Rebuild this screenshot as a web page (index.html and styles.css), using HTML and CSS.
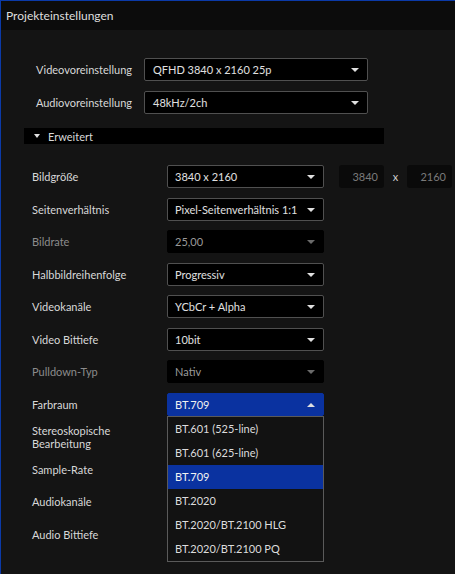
FILE: index.html
```html
<!DOCTYPE html>
<html lang="de">
<head>
<meta charset="utf-8">
<link rel="stylesheet" href="styles.css">
</head>
<body>
<div class="window">
  <div class="titlebar">Projekteinstellungen</div>
  <div class="content">
    <div class="presets">
      <div class="plabel">Videovoreinstellung</div>
      <div class="select wide"><span>QFHD 3840 x 2160 25p</span><i class="arrow"></i></div>
      <div class="plabel">Audiovoreinstellung</div>
      <div class="select wide"><span>48kHz/2ch</span><i class="arrow"></i></div>
    </div>
    <div class="section"><i class="arrow small"></i><span>Erweitert</span></div>
    <div class="rows">
      <div class="row">
        <div class="label">Bildgröße</div>
        <div class="select"><span>3840 x 2160</span><i class="arrow"></i></div>
        <div class="num">3840</div><div class="times">x</div><div class="num">2160</div>
      </div>
      <div class="row">
        <div class="label">Seitenverhältnis</div>
        <div class="select"><span>Pixel-Seitenverhältnis 1:1</span><i class="arrow"></i></div>
      </div>
      <div class="row">
        <div class="label disabled">Bildrate</div>
        <div class="select off"><span>25,00</span><i class="arrow"></i></div>
      </div>
      <div class="row">
        <div class="label">Halbbildreihenfolge</div>
        <div class="select"><span>Progressiv</span><i class="arrow"></i></div>
      </div>
      <div class="row">
        <div class="label">Videokanäle</div>
        <div class="select"><span>YCbCr + Alpha</span><i class="arrow"></i></div>
      </div>
      <div class="row">
        <div class="label">Video Bittiefe</div>
        <div class="select"><span>10bit</span><i class="arrow"></i></div>
      </div>
      <div class="row">
        <div class="label disabled">Pulldown-Typ</div>
        <div class="select off"><span>Nativ</span><i class="arrow"></i></div>
      </div>
      <div class="row">
        <div class="label">Farbraum</div>
        <div class="select open"><span>BT.709</span><i class="arrow up"></i>
          <ul class="list">
            <li>BT.601 (525-line)</li>
            <li>BT.601 (625-line)</li>
            <li class="sel">BT.709</li>
            <li>BT.2020</li>
            <li>BT.2020/BT.2100 HLG</li>
            <li>BT.2020/BT.2100 PQ</li>
          </ul>
        </div>
      </div>
      <div class="row">
        <div class="label two"><div>Stereoskopische</div><div>Bearbeitung</div></div>
      </div>
      <div class="row">
        <div class="label">Sample-Rate</div>
      </div>
      <div class="row">
        <div class="label">Audiokanäle</div>
      </div>
      <div class="row">
        <div class="label">Audio Bittiefe</div>
      </div>
    </div>
  </div>
</div>
</body>
</html>
```
FILE: styles.css
```css
html, body {
  margin: 0;
  padding: 0;
  background: #141414;
}
body {
  font-family: Lato, "Liberation Sans", sans-serif;
  font-size: 11px;
  color: #d8d8d8;
}
.window {
  width: 455px;
  height: 574px;
  box-sizing: border-box;
  border-top: 1px solid #0b3aa8;
  border-left: 1px solid #0b3aa8;
  background: #141414;
  overflow: hidden;
}
.titlebar {
  height: 29px;
  line-height: 29px;
  background: #0c0c0c;
  padding-left: 5px;
  color: #dedede;
  font-size: 12px;
}
.presets {
  display: grid;
  grid-template-columns: 131px 224px;
  column-gap: 12px;
  row-gap: 10px;
  padding-top: 28px;
  align-items: center;
}
.plabel {
  text-align: right;
}
.select {
  position: relative;
  height: 23px;
  box-sizing: border-box;
  background: #000;
  border: 1px solid #505050;
  border-radius: 2px;
  display: flex;
  align-items: center;
  padding-left: 7px;
  color: #e0e0e0;
  width: 157px;
}
.select.wide {
  width: 224px;
  padding-left: 8px;
}
.select .arrow {
  position: absolute;
  right: 8px;
  top: 9px;
}
.arrow {
  width: 0;
  height: 0;
  border-left: 4px solid transparent;
  border-right: 4px solid transparent;
  border-top: 4px solid #e0e0e0;
}
.arrow.up {
  border-top: 0;
  border-bottom: 4px solid #e0e0e0;
}
.select.off {
  border-color: #000;
  color: #9a9a9a;
}
.select.off .arrow {
  border-top-color: #6a6a6a;
}
.select.open {
  background: #0a32a0;
  border-color: #0a32a0;
  color: #f0f0f0;
}
.section {
  margin: 14px 0 0 23px;
  width: 360px;
  height: 16px;
  background: #000;
  display: flex;
  align-items: center;
  gap: 8px;
  padding-left: 10px;
  box-sizing: border-box;
}
.section .arrow {
  border-left-width: 3.5px;
  border-right-width: 3.5px;
}
.rows {
  display: flex;
  flex-direction: column;
  gap: 9.5px;
  margin-top: 21px;
  padding-left: 31px;
}
.row {
  display: flex;
  align-items: center;
  height: 23px;
}
.label {
  width: 135px;
  flex: none;
  color: #d8d8d8;
}
.label.disabled {
  color: #8c8c8c;
}
.label.two {
  display: flex;
  flex-direction: column;
  line-height: 13px;
}
.num {
  width: 45px;
  height: 23px;
  box-sizing: border-box;
  background: #0a0a0a;
  border-radius: 3px;
  color: #7a7a7a;
  text-align: right;
  line-height: 23px;
  padding-right: 6px;
}
.row .select + .num {
  margin-left: 15px;
}
.times {
  width: 23px;
  text-align: center;
  color: #cfcfcf;
}
.list {
  position: absolute;
  left: -1px;
  top: 22px;
  width: 157px;
  box-sizing: border-box;
  margin: 0;
  padding: 0;
  list-style: none;
  background: #121212;
  border: 1px solid #5a5a5a;
  z-index: 5;
}
.list li {
  height: 24px;
  line-height: 24px;
  padding-left: 7px;
  color: #dcdcdc;
}
.list li.sel {
  background: #0a32a0;
  color: #f2f2f2;
}
```
